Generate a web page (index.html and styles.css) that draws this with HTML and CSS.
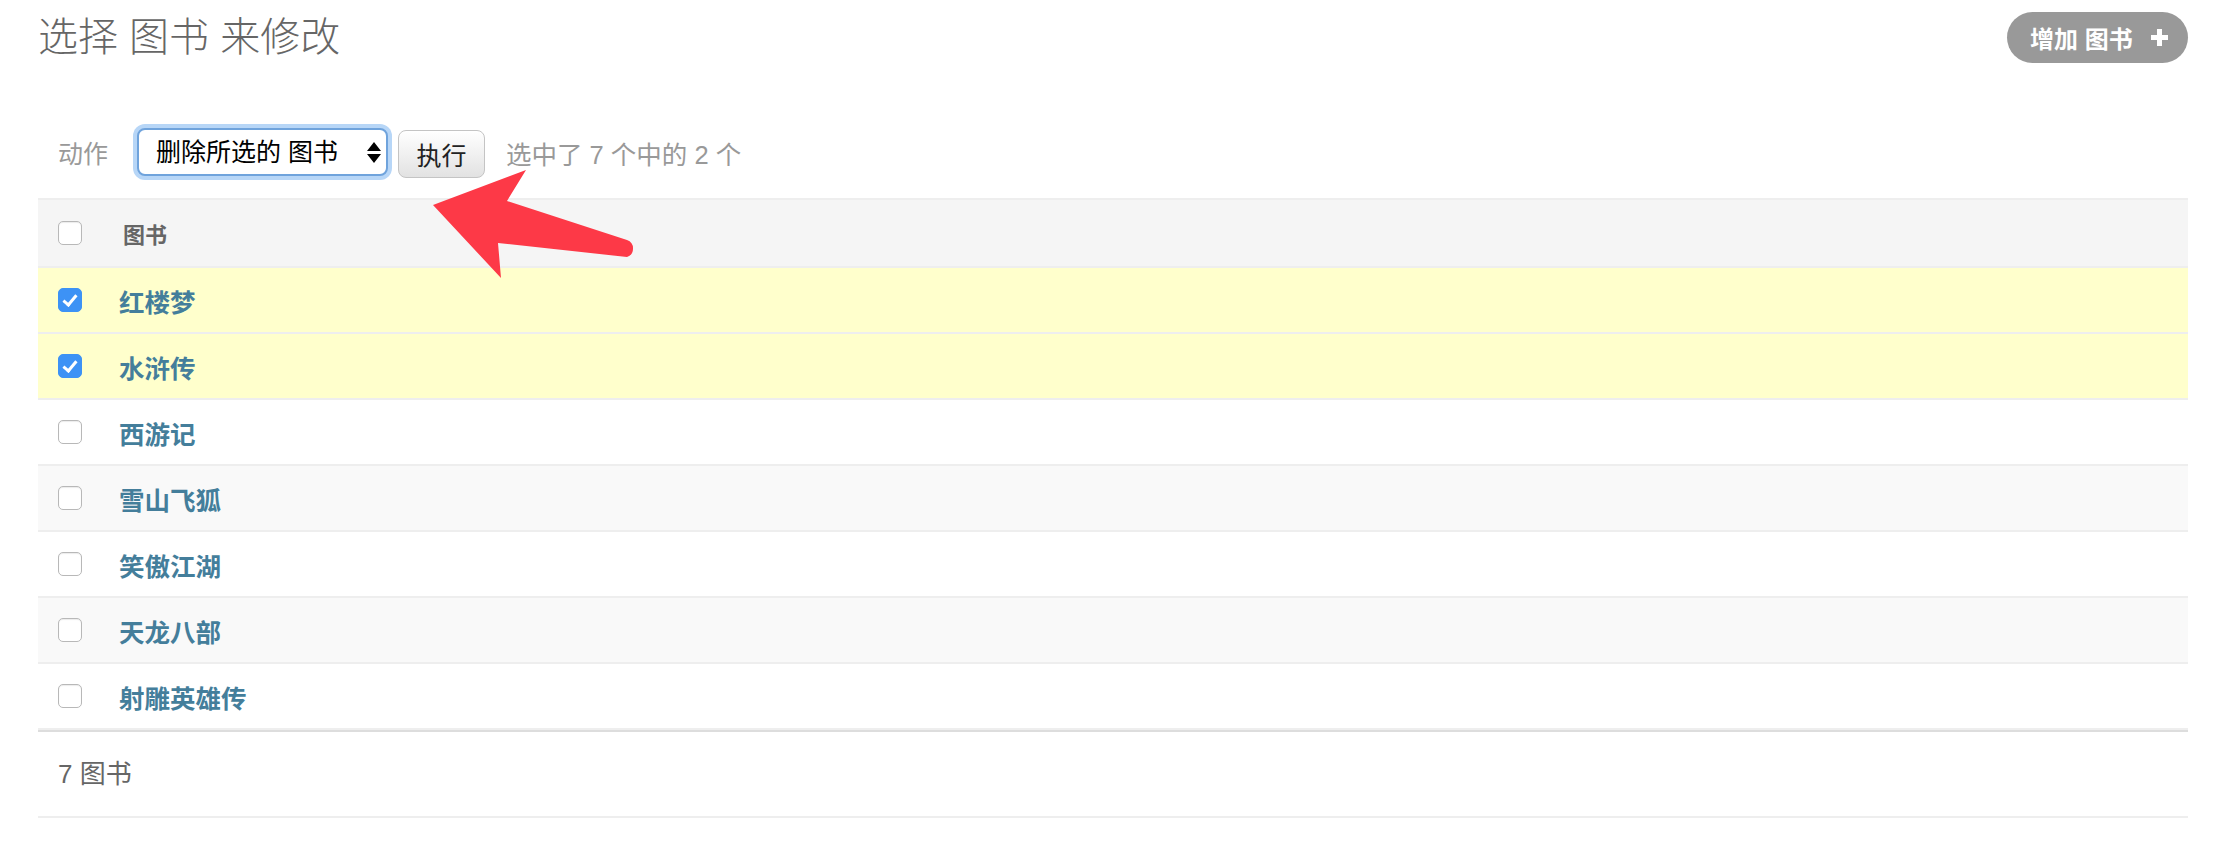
FILE: index.html
```html
<!DOCTYPE html>
<html lang="zh-cn">
<head>
<meta charset="UTF-8">
<meta name="viewport" content="width=device-width, initial-scale=1.0">
<title>选择 图书 来修改</title>
<link rel="stylesheet" href="styles.css">
</head>
<body>

<div id="content">
  <div class="page-head">
    <h1>选择 图书 来修改</h1>
    <a href="#" class="addlink">增加 图书
      <svg class="plus" width="19" height="19" viewBox="0 0 19 19"><path d="M9.5 1v17M1 9.5h17" stroke="#fff" stroke-width="5"/></svg>
    </a>
  </div>

  <form id="changelist-form">
    <div class="actions">
      <label for="action">动作</label>
      <span class="select-wrap">
        <select id="action" name="action">
          <option>删除所选的 图书</option>
        </select>
        <svg class="select-arrows" width="14" height="21" viewBox="0 0 14 21"><path d="M0 9L7 0L14 9Z M0 12L14 12L7 21Z" fill="#000"/></svg>
      </span>
      <button type="submit" class="button">执行</button>
      <span class="action-counter">选中了 7 个中的 2 个</span>
    </div>

    <table id="result_list">
      <thead>
        <tr>
          <th class="action-checkbox-column"><input type="checkbox"></th>
          <th class="column-name">图书</th>
        </tr>
      </thead>
      <tbody>
        <tr class="selected"><td class="action-checkbox"><input type="checkbox" checked></td><th><a href="#">红楼梦</a></th></tr>
        <tr class="selected"><td class="action-checkbox"><input type="checkbox" checked></td><th><a href="#">水浒传</a></th></tr>
        <tr><td class="action-checkbox"><input type="checkbox"></td><th><a href="#">西游记</a></th></tr>
        <tr><td class="action-checkbox"><input type="checkbox"></td><th><a href="#">雪山飞狐</a></th></tr>
        <tr><td class="action-checkbox"><input type="checkbox"></td><th><a href="#">笑傲江湖</a></th></tr>
        <tr><td class="action-checkbox"><input type="checkbox"></td><th><a href="#">天龙八部</a></th></tr>
        <tr><td class="action-checkbox"><input type="checkbox"></td><th><a href="#">射雕英雄传</a></th></tr>
      </tbody>
    </table>

    <p class="paginator">7 图书</p>
  </form>

  <!-- 标注箭头 -->
  <svg class="pointer-arrow" width="230" height="130" viewBox="0 0 230 130">
    <path d="M13 45 L106 10 L87 41 L207 80 A9 9 0 0 1 207 97 L78 83 L81 118 Z" fill="#fd3947"/>
  </svg>
</div>

</body>
</html>
```

FILE: styles.css
```css
body {
  margin: 0;
  font-family: "Liberation Sans", "Noto Sans CJK SC", sans-serif;
  color: #333;
  background-color: #fff;
}
#content {
  position: relative;
  padding: 12px 46px 0 38px;
}
.page-head {
  display: flex;
  justify-content: space-between;
  align-items: center;
  height: 51px;
}
h1 {
  margin: 0;
  font-size: 40px;
  font-weight: 300;
  line-height: 51px;
  color: #666;
}
.addlink {
  display: flex;
  align-items: center;
  gap: 17px;
  box-sizing: border-box;
  width: 181px;
  height: 51px;
  padding: 0 17px 0 23px;
  border-radius: 26px;
  background-color: #999;
  color: #fff;
  font-size: 24px;
  font-weight: bold;
  text-decoration: none;
}
.actions {
  display: flex;
  align-items: center;
  height: 48px;
  margin: 65px 0 22px;
  padding-left: 20px;
}
.actions label {
  margin-right: 29px;
  font-size: 25px;
  color: #999;
}
.select-wrap {
  position: relative;
  display: inline-block;
  height: 48px;
  margin-right: 10px;
}
.select-wrap select {
  appearance: none;
  -webkit-appearance: none;
  box-sizing: border-box;
  width: 251px;
  height: 48px;
  padding: 0 0 0 17px;
  border: 2px solid #6fa3dc;
  border-radius: 8px;
  box-shadow: 0 0 0 4px #b7d6f7;
  background-color: #fff;
  font-family: "Liberation Sans", "Noto Sans CJK SC", sans-serif;
  font-size: 25px;
  color: #000;
  outline: none;
}
.select-arrows {
  position: absolute;
  left: 230px;
  top: 14px;
}
.button {
  box-sizing: border-box;
  width: 87px;
  height: 48px;
  margin: 4px 21px 0 0;
  padding: 0;
  border: 1px solid #c4c4c4;
  border-radius: 8px;
  background: linear-gradient(#fff, #e2e2e2);
  font-family: "Liberation Sans", "Noto Sans CJK SC", sans-serif;
  font-size: 25px;
  color: #222;
}
.action-counter {
  font-size: 25.5px;
  color: #999;
}
#result_list {
  width: 100%;
  border-collapse: separate;
  border-spacing: 0;
}
#result_list thead th {
  height: 66px;
  padding: 0;
  border-top: 2px solid #eee;
  border-bottom: 2px solid #eee;
  background-color: #f5f5f5;
  font-size: 22px;
  font-weight: bold;
  color: #666;
  text-align: left;
}
#result_list thead th.column-name {
  padding-left: 4px;
}
#result_list td,
#result_list tbody th {
  height: 64px;
  padding: 0;
  border-bottom: 2px solid #eee;
  text-align: left;
  vertical-align: middle;
}
#result_list tbody tr:nth-child(even) td,
#result_list tbody tr:nth-child(even) th {
  background-color: #f9f9f9;
}
#result_list tbody tr.selected td,
#result_list tbody tr.selected th {
  background-color: #ffc;
}
.action-checkbox,
.action-checkbox-column {
  width: 61px;
  padding-left: 20px !important;
}
#result_list tbody th a {
  font-size: 25.5px;
  font-weight: bold;
  color: #447e9b;
  text-decoration: none;
}
/* checkbox estilo mac */
#result_list input[type="checkbox"] {
  appearance: none;
  -webkit-appearance: none;
  position: relative;
  display: block;
  box-sizing: border-box;
  width: 24px;
  height: 24px;
  margin: 0;
  border: 1px solid #b8b8b8;
  border-radius: 5px;
  background-color: #fff;
  box-shadow: inset 0 1px 1px rgba(0, 0, 0, 0.08);
}
#result_list input[type="checkbox"]:checked {
  border-color: #3d92f5;
  background-color: #3d92f5;
  box-shadow: none;
}
#result_list input[type="checkbox"]:checked::after {
  content: "";
  position: absolute;
  left: 7px;
  top: 3px;
  width: 5px;
  height: 11px;
  border-right: 3px solid #fff;
  border-bottom: 3px solid #fff;
  transform: rotate(40deg);
}
.paginator {
  height: 84px;
  margin: 0;
  padding-left: 20px;
  border-top: 2px solid #ddd;
  border-bottom: 2px solid #eee;
  font-size: 26px;
  line-height: 84px;
  color: #666;
}
.pointer-arrow {
  position: absolute;
  left: 420px;
  top: 160px;
  pointer-events: none;
}
```
